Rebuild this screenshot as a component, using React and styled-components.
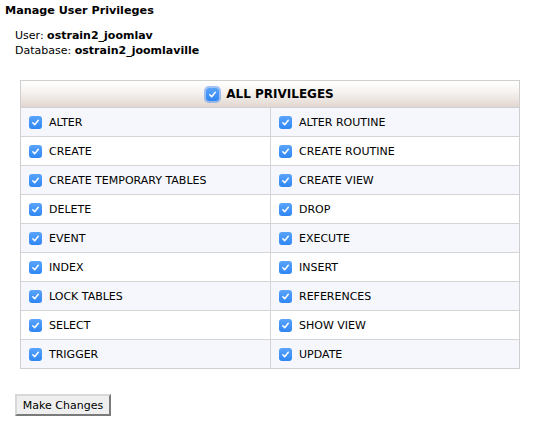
import React from "react";
import styled, { createGlobalStyle } from "styled-components";

const Global = createGlobalStyle`
  html, body { margin: 0; padding: 0; background: #fff; }
  body { font-family: "DejaVu Sans", Verdana, sans-serif; color: #000; }
`;

const Page = styled.div`
  padding: 4px 0 0 5px;
  width: 551px;
  height: 429px;
  box-sizing: border-box;
`;

const Title = styled.h1`
  margin: 0;
  font-size: 11.2px;
  font-weight: bold;
  line-height: 14px;
`;

const Info = styled.div`
  margin: 10px 0 0 10px;
  font-size: 11px;
  line-height: 15px;
  b { font-weight: bold; }
`;

const Table = styled.div`
  margin: 22px 0 0 15px;
  width: 500px;
  box-sizing: border-box;
  border: 1px solid #cfcfcf;
  display: grid;
  grid-template-columns: 250px 1fr;
`;

const Header = styled.div`
  grid-column: 1 / span 2;
  height: 26px;
  border-bottom: 1px solid #cfcfcf;
  background: linear-gradient(#ffffff 0%, #f7f4f1 40%, #e2d7d0 100%);
  display: flex;
  align-items: center;
  justify-content: center;
  gap: 7px;
  font-size: 12px;
  font-weight: bold;
`;

const Cell = styled.div`
  box-sizing: border-box;
  display: flex;
  align-items: center;
  gap: 7px;
  padding-left: 8px;
  font-size: 11px;
  background: ${(p) => (p.$alt ? "#ffffff" : "#f5f7fc")};
  border-top: ${(p) => (p.$first ? "none" : "1px solid #d4d4d4")};
  border-right: ${(p) => (p.$left ? "1px solid #d4d4d4" : "none")};
  height: ${(p) => (p.$first ? "28px" : "29px")};
`;

const Box = styled.span`
  width: 13px;
  height: 13px;
  border-radius: 3px;
  background: linear-gradient(#5aa4fb, #2f86f4);
  display: inline-flex;
  align-items: center;
  justify-content: center;
  flex: none;
  box-shadow: ${(p) => (p.$focus ? "0 0 0 2px rgba(90,150,240,0.55)" : "none")};
`;

const CheckMark = () => (
  <svg width="9" height="9" viewBox="0 0 9 9">
    <path d="M1.8 4.8 L3.7 6.7 L7.3 2.3" fill="none" stroke="#fff" strokeWidth="1.5" strokeLinecap="round" strokeLinejoin="round" />
  </svg>
);

const Button = styled.button`
  margin: 25px 0 0 10px;
  width: 96px;
  height: 22px;
  padding: 0;
  font-family: "DejaVu Sans", Verdana, sans-serif;
  font-size: 11px;
  color: #000;
  background: #efefef;
  border: 2px solid;
  border-color: #d8d8d8 #7a7a7a #7a7a7a #d8d8d8;
`;

const rows = [
  ["ALTER", "ALTER ROUTINE"],
  ["CREATE", "CREATE ROUTINE"],
  ["CREATE TEMPORARY TABLES", "CREATE VIEW"],
  ["DELETE", "DROP"],
  ["EVENT", "EXECUTE"],
  ["INDEX", "INSERT"],
  ["LOCK TABLES", "REFERENCES"],
  ["SELECT", "SHOW VIEW"],
  ["TRIGGER", "UPDATE"],
];

export default function App() {
  return (
    <Page>
      <Global />
      <Title>Manage User Privileges</Title>
      <Info>
        <div>User: <b>ostrain2_joomlav</b></div>
        <div>Database: <b>ostrain2_joomlaville</b></div>
      </Info>
      <Table>
        <Header>
          <Box $focus><CheckMark /></Box>
          <span>ALL PRIVILEGES</span>
        </Header>
        {rows.map(([a, b], i) => (
          <React.Fragment key={a}>
            <Cell $left $alt={i % 2 === 1} $first={i === 0}>
              <Box><CheckMark /></Box>
              {a}
            </Cell>
            <Cell $alt={i % 2 === 1} $first={i === 0}>
              <Box><CheckMark /></Box>
              {b}
            </Cell>
          </React.Fragment>
        ))}
      </Table>
      <Button>Make Changes</Button>
    </Page>
  );
}
